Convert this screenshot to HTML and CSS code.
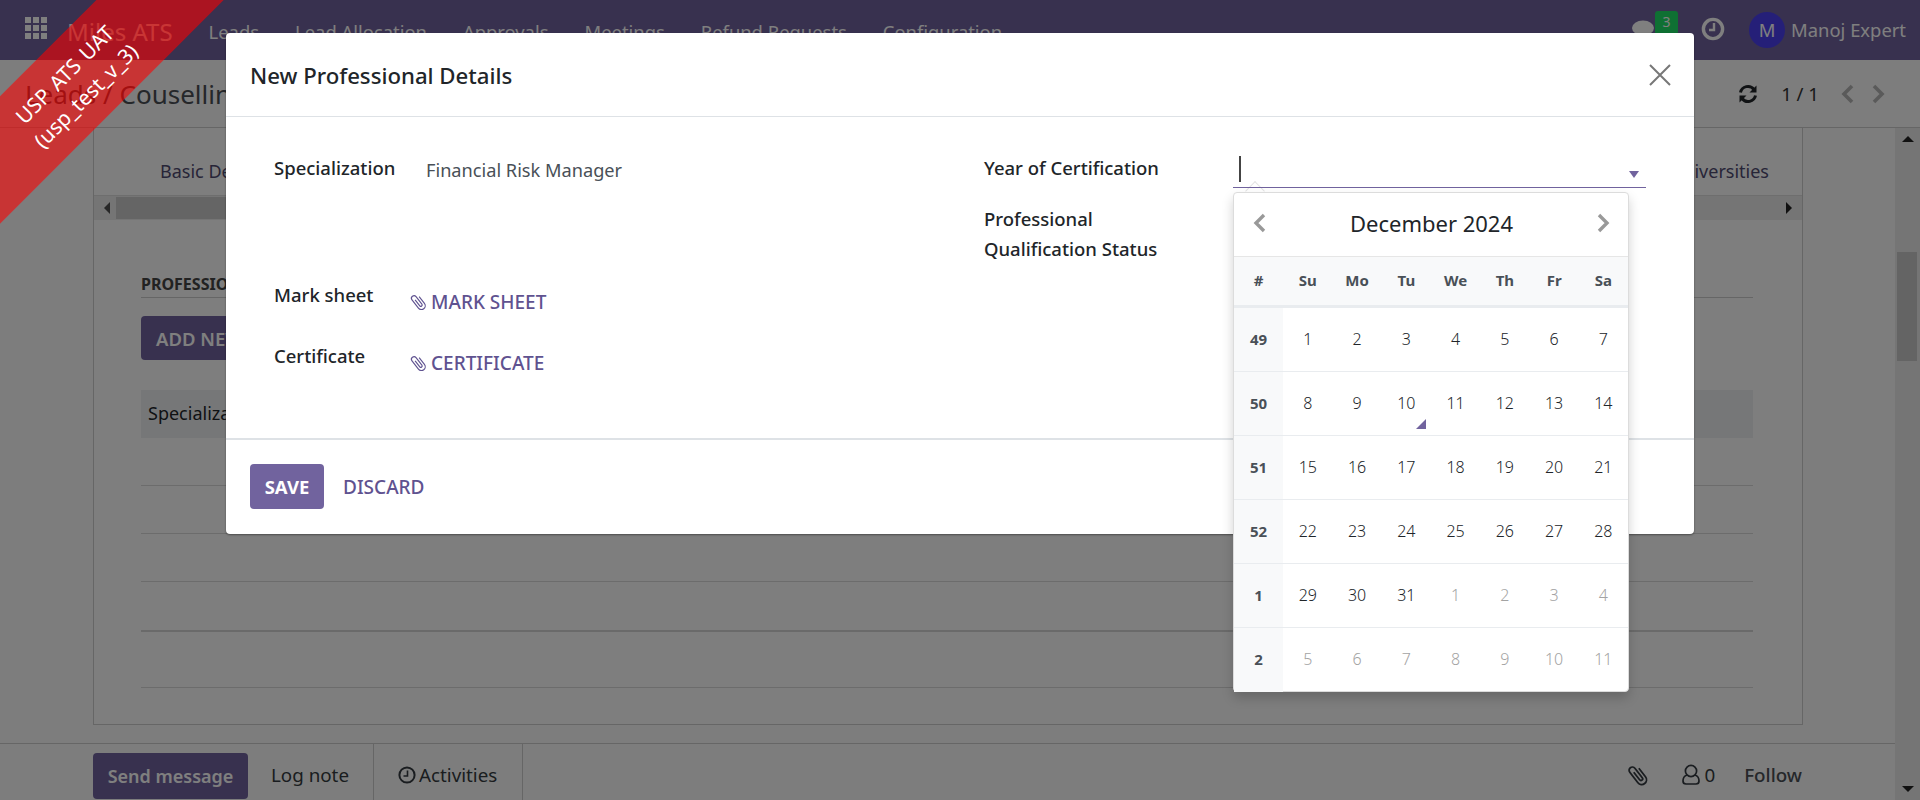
FILE: index.html
```html
<!DOCTYPE html>
<html lang="en">

<head>
    <meta charset="UTF-8">
    <meta name="viewport" content="width=device-width, initial-scale=1.0">
    <title>New Professional Details</title>
    <link rel="stylesheet" href="styles.css">
</head>

<body>
    <div class="app">
        <header class="navbar">
            <svg class="apps-icon" width="22" height="22" viewBox="0 0 22 22" fill="currentColor">
                <rect x="0" y="0" width="6" height="6"/><rect x="8" y="0" width="6" height="6"/><rect x="16" y="0" width="6" height="6"/>
                <rect x="0" y="8" width="6" height="6"/><rect x="8" y="8" width="6" height="6"/><rect x="16" y="8" width="6" height="6"/>
                <rect x="0" y="16" width="6" height="6"/><rect x="8" y="16" width="6" height="6"/><rect x="16" y="16" width="6" height="6"/>
            </svg>
            <span class="brand">Miles ATS</span>
            <nav class="menu">
                <span>Leads</span>
                <span>Lead Allocation</span>
                <span>Approvals</span>
                <span>Meetings</span>
                <span>Refund Requests</span>
                <span>Configuration</span>
            </nav>
            <div class="systray">
                <div class="chat">
                    <svg width="24" height="18" viewBox="0 0 24 18" fill="currentColor">
                        <ellipse cx="12" cy="8" rx="11" ry="7.500"/>
                        <path d="M5 12 L3 18 L11 15 Z"/>
                    </svg>
                    <span class="chat-count">3</span>
                </div>
                <svg class="clock" width="24" height="24" viewBox="0 0 24 24" fill="none" stroke="currentColor" stroke-width="3.4">
                    <circle cx="12" cy="12" r="9.6"/>
                    <path d="M13 6 V13 H8" stroke-width="2.4"/>
                </svg>
                <span class="avatar">M</span>
                <span class="user-name">Manoj Expert</span>
            </div>
        </header>

        <div class="control-panel">
            <div class="breadcrumb">Leads / Couselling</div>
            <div class="pager">
                <svg class="refresh" width="20" height="20" viewBox="0 0 20 20" fill="none" stroke="currentColor" stroke-width="3">
                    <path d="M2.5 8.5 A7.6 7.6 0 0 1 16 5.5"/>
                    <path d="M17.5 11.5 A7.6 7.6 0 0 1 4 14.5"/>
                    <path d="M18.5 1.5 V8.5 H11.5 Z" fill="currentColor" stroke="none"/>
                    <path d="M1.5 18.5 V11.5 H8.5 Z" fill="currentColor" stroke="none"/>
                </svg>
                <span class="pager-count">1 / 1</span>
                <svg class="pager-arrow" width="14" height="20" viewBox="0 0 14 20" fill="none" stroke="currentColor" stroke-width="3.6">
                    <path d="M11 2 L3 10 L11 18"/>
                </svg>
                <svg class="pager-arrow" width="14" height="20" viewBox="0 0 14 20" fill="none" stroke="currentColor" stroke-width="3.6">
                    <path d="M3 2 L11 10 L3 18"/>
                </svg>
            </div>
        </div>

        <div class="main">
            <div class="content">
                <section class="sheet">
                    <div class="tabs">
                        <span>Basic Details</span>
                        <span>Universities</span>
                    </div>
                    <div class="hscroll">
                        <span class="arrow-left"></span>
                        <span class="hscroll-thumb"></span>
                        <span class="arrow-right"></span>
                    </div>
                    <div class="tab-body">
                        <h3 class="section-title">PROFESSIONAL DETAILS</h3>
                        <button class="btn-add">ADD NEW</button>
                        <div class="list-head">Specialization</div>
                        <div class="list-row"></div>
                        <div class="list-row"></div>
                        <div class="list-row"></div>
                        <div class="list-row list-row-total"></div>
                        <div class="list-row list-row-last"></div>
                    </div>
                </section>

                <footer class="chatter">
                    <button class="btn-send">Send message</button>
                    <span class="chatter-tab chatter-log">Log note</span>
                    <span class="chatter-tab chatter-activities">
                        <svg width="18" height="18" viewBox="0 0 18 18" fill="none" stroke="currentColor" stroke-width="2">
                            <circle cx="9" cy="9" r="7.6"/>
                            <path d="M9.5 4.5 V10 H5.5" stroke-width="1.6"/>
                        </svg>
                        Activities
                    </span>
                    <div class="chatter-right">
                        <svg class="clip-big" width="24" height="24" viewBox="0 0 20 20" fill="none" stroke="currentColor" stroke-width="1.5">
                            <path transform="rotate(-38 10 10)" d="M14 6 V15 A4 4 0 0 1 6 15 V4 A2.700 2.700 0 0 1 11.400 4 V14 A1.400 1.400 0 0 1 8.600 14 V6"/>
                        </svg>
                        <span class="followers">
                            <svg width="18" height="21" viewBox="0 0 18 21" fill="none" stroke="currentColor" stroke-width="1.7">
                                <circle cx="9" cy="7" r="5.6"/>
                                <path d="M5 11 C2 12 1 14.500 1 17 C1 19 2 20 4 20 H14 C16 20 17 19 17 17 C17 14.500 16 12 13 11"/>
                            </svg>
                            0
                        </span>
                        <span class="follow">Follow</span>
                    </div>
                </footer>
            </div>
            <div class="vscroll">
                <span class="arrow-up"></span>
                <span class="vscroll-thumb"></span>
                <span class="arrow-down"></span>
            </div>
        </div>
    </div>

    <div class="backdrop"></div>

    <div class="ribbon">USP ATS UAT<br>(usp_test_v_3)</div>

    <div class="modal">
        <div class="modal-header">
            <h4 class="modal-title">New Professional Details</h4>
            <svg class="modal-close" width="22" height="22" viewBox="0 0 22 22" stroke="currentColor" stroke-width="2">
                <path d="M1 1 L21 21 M21 1 L1 21"/>
            </svg>
        </div>
        <div class="modal-body">
            <div class="form-col">
                <div class="form-row form-row-tall">
                    <label class="form-label">Specialization</label>
                    <span class="form-value">Financial Risk Manager</span>
                </div>
                <div class="form-row form-row-file">
                    <label class="form-label form-label-short">Mark sheet</label>
                    <a class="file-link">
                        <svg width="19" height="20" viewBox="0 0 20 20" fill="none" stroke="currentColor" stroke-width="1.200">
                            <path transform="rotate(-38 10 10)" d="M14 6 V15 A4 4 0 0 1 6 15 V4 A2.700 2.700 0 0 1 11.400 4 V14 A1.400 1.400 0 0 1 8.600 14 V6"/>
                        </svg>
                        MARK SHEET
                    </a>
                </div>
                <div class="form-row form-row-file">
                    <label class="form-label form-label-short">Certificate</label>
                    <a class="file-link">
                        <svg width="19" height="20" viewBox="0 0 20 20" fill="none" stroke="currentColor" stroke-width="1.200">
                            <path transform="rotate(-38 10 10)" d="M14 6 V15 A4 4 0 0 1 6 15 V4 A2.700 2.700 0 0 1 11.400 4 V14 A1.400 1.400 0 0 1 8.600 14 V6"/>
                        </svg>
                        CERTIFICATE
                    </a>
                </div>
            </div>
            <div class="form-col form-col-right">
                <div class="form-row form-row-year">
                    <label class="form-label form-label-wide">Year of Certification</label>
                    <div class="year-input">
                        <span class="text-caret"></span>
                        <span class="select-arrow"></span>
                        <span class="calendar-tip"></span>
                    </div>
                </div>
                <div class="form-row">
                    <label class="form-label form-label-wide">Professional<br>Qualification Status</label>
                </div>
            </div>
        </div>
        <div class="modal-footer">
            <button class="btn-save">SAVE</button>
            <a class="btn-discard">DISCARD</a>
        </div>
    </div>

    <div class="calendar">
        <div class="calendar-head">
            <svg width="14" height="20" viewBox="0 0 14 20" fill="none" stroke="currentColor" stroke-width="3.4">
                <path d="M11 2 L3 10 L11 18"/>
            </svg>
            <span class="calendar-title">December 2024</span>
            <svg width="14" height="20" viewBox="0 0 14 20" fill="none" stroke="currentColor" stroke-width="3.4">
                <path d="M3 2 L11 10 L3 18"/>
            </svg>
        </div>
        <div class="calendar-days">
            <span>#</span><span>Su</span><span>Mo</span><span>Tu</span><span>We</span><span>Th</span><span>Fr</span><span>Sa</span>
        </div>
        <div class="calendar-week">
            <span class="week-no">49</span><span>1</span><span>2</span><span>3</span><span>4</span><span>5</span><span>6</span><span>7</span>
        </div>
        <div class="calendar-week">
            <span class="week-no">50</span><span>8</span><span>9</span><span class="today">10</span><span>11</span><span>12</span><span>13</span><span>14</span>
        </div>
        <div class="calendar-week">
            <span class="week-no">51</span><span>15</span><span>16</span><span>17</span><span>18</span><span>19</span><span>20</span><span>21</span>
        </div>
        <div class="calendar-week">
            <span class="week-no">52</span><span>22</span><span>23</span><span>24</span><span>25</span><span>26</span><span>27</span><span>28</span>
        </div>
        <div class="calendar-week">
            <span class="week-no">1</span><span>29</span><span>30</span><span>31</span><span class="muted">1</span><span class="muted">2</span><span class="muted">3</span><span class="muted">4</span>
        </div>
        <div class="calendar-week">
            <span class="week-no">2</span><span class="muted">5</span><span class="muted">6</span><span class="muted">7</span><span class="muted">8</span><span class="muted">9</span><span class="muted">10</span><span class="muted">11</span>
        </div>
    </div>
</body>

</html>
```

FILE: styles.css
```css
* {
    box-sizing: border-box;
}

body {
    margin: 0;
    height: 800px;
    overflow: hidden;
    font-family: "Noto Sans", "Open Sans", sans-serif;
    font-size: 18px;
    color: #212529;
    background-color: #fafafa;
}

.app {
    display: flex;
    flex-direction: column;
    height: 800px;
}

/* top bar */
.navbar {
    display: flex;
    align-items: center;
    height: 60px;
    padding: 3px 14px 0 25px;
    background-color: #71639e;
    color: #fff;
    font-size: 18.4px;
    flex-shrink: 0;
}

.apps-icon {
    margin: 0 20px 7px 0;
}

.brand {
    font-size: 24px;
    margin-right: 36px;
}

.menu {
    display: flex;
    gap: 36px;
}

.systray {
    display: flex;
    align-items: center;
    margin-left: auto;
}

.chat {
    position: relative;
    display: flex;
    margin: 0 46px 6px 0;
}

.chat-count {
    position: absolute;
    left: 24px;
    top: -9px;
    width: 23px;
    height: 24px;
    background-color: #1fe066;
    color: #fff;
    font-size: 14px;
    line-height: 22px;
    text-align: center;
    border-radius: 3px;
}

.clock {
    margin: 0 24px 6px 0;
}

.avatar {
    width: 36px;
    height: 36px;
    margin: 0 6px 4px 0;
    border-radius: 50%;
    background-color: #4a3ff0;
    text-align: center;
    line-height: 36px;
}

.user-name {
    margin-bottom: 4px;
}

/* breadcrumb row */
.control-panel {
    display: flex;
    align-items: center;
    justify-content: space-between;
    height: 68px;
    padding: 0 35px 0 25px;
    border-bottom: 1px solid #ccc;
    flex-shrink: 0;
}

.breadcrumb {
    font-size: 26px;
    color: #4a4f55;
}

.pager {
    display: flex;
    align-items: center;
}

.refresh {
    margin-right: 23px;
}

.pager-count {
    margin-right: 22px;
    font-size: 18.6px;
    color: #333;
}

.pager-arrow {
    margin-right: 16px;
    color: #b4b4b4;
}

.pager-arrow:last-child {
    margin-right: 0;
}

.main {
    flex: 1;
    display: flex;
    min-height: 0;
}

.content {
    flex: 1;
    min-width: 0;
}

/* form sheet behind the dialog */
.sheet {
    height: 597px;
    margin: 0 92px 18px 93px;
    background-color: #fcfcfc;
    border: 1px solid #ccc;
    border-top: 0;
}

.tabs {
    display: flex;
    justify-content: space-between;
    height: 67px;
    padding: 31px 33px 0 66px;
    color: #4f4a70;
}

.hscroll {
    display: flex;
    align-items: center;
    height: 25px;
    background-color: #ebebeb;
    border-top: 1px solid #ddd;
}

.arrow-left {
    width: 0;
    height: 0;
    margin: 0 6px 0 10px;
    border: 6px solid transparent;
    border-left: 0;
    border-right-color: #505050;
}

.arrow-right {
    width: 0;
    height: 0;
    margin: 0 10px 0 auto;
    border: 6px solid transparent;
    border-right: 0;
    border-left-color: #222;
}

.hscroll-thumb {
    width: 1200px;
    height: 22px;
    background-color: #cacaca;
}

.tab-body {
    padding: 0 49px 0 47px;
}

.section-title {
    margin: 0;
    height: 78px;
    padding-top: 52px;
    font-size: 16px;
    line-height: 24px;
    color: #444;
    border-bottom: 1px solid #ccc;
}

.btn-add {
    display: block;
    width: 160px;
    height: 44px;
    margin: 18px 0 30px;
    border: 0;
    border-radius: 4px;
    background-color: #71639e;
    color: #fff;
    font: 600 18.5px "Noto Sans", "Open Sans", sans-serif;
    text-align: left;
    padding-left: 15px;
}

.list-head {
    height: 48px;
    padding: 9px 7px;
    background-color: #eceff1;
    line-height: 28px;
}

.list-row {
    height: 48px;
    border-bottom: 1px solid #d8d8d8;
}

.list-row-total {
    height: 50px;
    border-bottom-width: 2px;
    border-bottom-color: #d4d4d4;
}

.list-row-last {
    height: 56px;
}

/* message bar */
.chatter {
    display: flex;
    align-items: flex-start;
    height: 57px;
    padding-left: 93px;
    border-top: 1px solid #ccc;
    font-size: 18.8px;
}

.btn-send {
    width: 155px;
    height: 46px;
    margin-top: 9px;
    border: 0;
    border-radius: 4px;
    background-color: #71639e;
    color: #fff;
    font: 600 18px "Noto Sans", "Open Sans", sans-serif;
}

.chatter-tab {
    display: flex;
    align-items: center;
    gap: 3px;
    height: 56px;
    padding: 5px 24px 0;
    color: #343a40;
    border-right: 1px solid #ccc;
}

.chatter-log {
    padding-left: 23px;
}

.chatter-activities {
    padding-right: 25px;
}

.chatter-right {
    display: flex;
    align-items: center;
    height: 56px;
    margin-left: auto;
    padding: 5px 93px 0 0;
}

.clip-big {
    margin-right: 32px;
    color: #343a40;
}

.followers {
    display: flex;
    align-items: center;
    gap: 4px;
    margin-right: 29px;
    color: #343a40;
}

.follow {
    font-weight: 500;
    color: #4a4f55;
}

.vscroll {
    position: relative;
    width: 25px;
    background-color: #ebebeb;
    flex-shrink: 0;
}

.arrow-up,
.arrow-down {
    position: absolute;
    left: 7px;
    width: 0;
    height: 0;
    border: 6px solid transparent;
}

.arrow-up {
    top: 8px;
    border-top: 0;
    border-bottom-color: #222;
}

.arrow-down {
    bottom: 8px;
    border-bottom: 0;
    border-top-color: #222;
}

.vscroll-thumb {
    position: absolute;
    left: 2px;
    top: 124px;
    width: 20px;
    height: 109px;
    background-color: #c8c8c8;
}

/* dialog layers */
.backdrop {
    position: absolute;
    inset: 0;
    background-color: rgba(0, 0, 0, 0.5);
}

.ribbon {
    position: absolute;
    left: -125px;
    top: 40px;
    width: 400px;
    height: 90px;
    padding-top: 15px;
    transform: rotate(-45deg);
    background-color: rgba(255, 0, 0, 0.58);
    color: #fff;
    font-size: 21px;
    word-spacing: 2px;
    line-height: 30px;
    text-align: center;
}

.modal {
    position: absolute;
    left: 226px;
    top: 33px;
    width: 1468px;
    height: 501px;
    display: flex;
    flex-direction: column;
    background-color: #fff;
    border-radius: 4px;
    box-shadow: 0 1px 2px rgba(0, 0, 0, 0.4);
}

.modal-header {
    display: flex;
    align-items: center;
    justify-content: space-between;
    height: 84px;
    padding: 1px 23px 0 24px;
    border-bottom: 1px solid #dee2e6;
}

.modal-title {
    margin: 0;
    font-size: 22.2px;
    font-weight: 460;
}

.modal-close {
    color: #777;
}

.modal-body {
    display: flex;
    flex: 1;
    padding: 36px 48px 0 48px;
}

.form-col {
    width: 710px;
}

.form-col-right {
    flex: 1;
}

.form-row {
    display: flex;
    line-height: 30px;
}

.form-row-tall {
    height: 127px;
}

.form-row-file {
    height: 61px;
}

.form-row-year {
    height: 51px;
}

.form-label {
    width: 152px;
    font-size: 18.5px;
    font-weight: 460;
}

.form-label-short {
    width: 136px;
}

.form-label-wide {
    width: 249px;
}

.form-value {
    padding-top: 2px;
    font-size: 18.2px;
    color: #495057;
}

.file-link {
    display: flex;
    align-items: center;
    gap: 3px;
    height: 30px;
    margin: 7px 0 0 -1px;
    font-size: 19px;
    font-weight: 500;
    color: #5f5290;
}

.year-input {
    position: relative;
    flex: 1;
    height: 36px;
    margin-top: -1px;
}

.year-input::after {
    content: "";
    position: absolute;
    left: 0;
    right: 0;
    bottom: 0;
    height: 1px;
    background-color: #71639e;
}

.text-caret {
    position: absolute;
    left: 6px;
    top: 4px;
    width: 2px;
    height: 26px;
    background-color: #444;
}

.select-arrow {
    position: absolute;
    right: 7px;
    top: 19px;
    width: 0;
    height: 0;
    border-style: solid;
    border-width: 7px 5.5px 0;
    border-color: #71639e transparent transparent;
}

.calendar-tip {
    position: absolute;
    left: 15px;
    bottom: -10px;
    width: 14px;
    height: 14px;
    background-color: #fff;
    border-left: 1px solid #e4e4e4;
    border-top: 1px solid #e4e4e4;
    transform: rotate(45deg);
}

.modal-footer {
    display: flex;
    align-items: center;
    gap: 19px;
    height: 96px;
    padding: 0 24px 1px;
    border-top: 2px solid #dee2e6;
}

.btn-save {
    width: 74px;
    height: 45px;
    border: 0;
    border-radius: 4px;
    background-color: #71639e;
    color: #fff;
    font: 700 18.5px "Noto Sans", "Open Sans", sans-serif;
}

.btn-discard {
    font-size: 19px;
    font-weight: 500;
    color: #5f5290;
}

/* date picker */
.calendar {
    position: absolute;
    left: 1233px;
    top: 192px;
    width: 396px;
    height: 500px;
    background-color: #fff;
    border: 1px solid #dcdcdc;
    border-radius: 4px;
    box-shadow: 0 6px 12px rgba(0, 0, 0, 0.18);
}

.calendar-head {
    display: flex;
    align-items: center;
    justify-content: space-between;
    height: 63px;
    padding: 0 18px 3px 19px;
    color: #999;
}

.calendar-title {
    font-size: 22px;
    color: #212529;
}

.calendar-days,
.calendar-week {
    display: grid;
    grid-template-columns: repeat(8, 1fr);
    text-align: center;
}

.calendar-days {
    height: 52px;
    line-height: 46px;
    font-size: 15px;
    font-weight: 700;
    color: #495057;
    background-color: #f8f9fa;
    border-top: 1px solid #e6e6e6;
    border-bottom: 3px solid #e9ecef;
}

.calendar-week {
    height: 64px;
    line-height: 62px;
    font-size: 16px;
    font-weight: 300;
    color: #212529;
    border-bottom: 1px solid #e9ecef;
}

.calendar-week:last-child {
    border-bottom: 0;
}

.week-no {
    background-color: #f8f9fa;
    font-size: 15px;
    font-weight: 700;
    color: #495057;
}

.muted {
    color: #a3a3a3;
}

.today {
    position: relative;
}

.today::after {
    content: "";
    position: absolute;
    right: 5px;
    bottom: 6px;
    width: 0;
    height: 0;
    border-style: solid;
    border-width: 0 0 10px 10px;
    border-color: transparent transparent #71639e transparent;
}
```
